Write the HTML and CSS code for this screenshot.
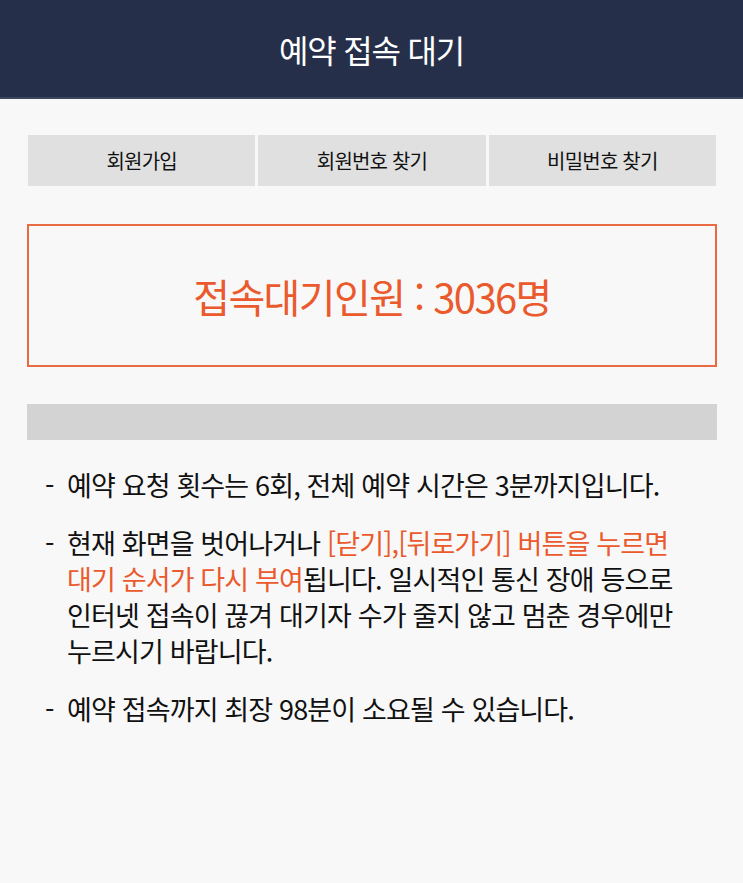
FILE: index.html
```html
<!DOCTYPE html>
<html lang="ko">

<head>
	<meta charset="UTF-8">
	<meta name="viewport" content="width=device-width, initial-scale=1.0">
	<title>예약 접속 대기</title>
	<link rel="stylesheet" href="styles.css">
</head>

<body>

	<header class="top-bar">
		<h1 class="top-title">예약 접속 대기</h1>
	</header>

	<main class="content">
		<nav class="tabs">
			<a class="tab" href="#">회원가입</a>
			<a class="tab" href="#">회원번호 찾기</a>
			<a class="tab" href="#">비밀번호 찾기</a>
		</nav>

		<div class="wait-box">
			<p class="wait-count">접속대기인원 : 3036명</p>
		</div>

		<div class="progress"></div>

		<ul class="notice">
			<li>예약 요청 횟수는 6회, 전체 예약 시간은 3분까지입니다.</li>
			<li>현재 화면을 벗어나거나 <span class="hl">[닫기],[뒤로가기] 버튼을 누르면<br>대기 순서가 다시 부여</span>됩니다. 일시적인 통신 장애 등으로<br>인터넷 접속이 끊겨 대기자 수가 줄지 않고 멈춘 경우에만<br>누르시기 바랍니다.</li>
			<li>예약 접속까지 최장 98분이 소요될 수 있습니다.</li>
		</ul>
	</main>

</body>

</html>
```

FILE: styles.css
```css
/* page base */
body {
	margin: 0;
	background-color: #f8f8f8;
	font-family: "Noto Sans CJK KR", "Noto Sans", sans-serif;
	color: #111;
}

.top-bar {
	height: 97px;
	background-color: #252f4a;
	border-bottom: 2px solid #3c4660;
	display: flex;
	align-items: center;
	justify-content: center;
}

.top-title {
	margin: 0;
	color: #fff;
	font-size: 32px;
	font-weight: 400;
	letter-spacing: -1.2px;
}

.content {
	padding: 36px 26px 0 27px;
}

.tabs {
	display: grid;
	grid-template-columns: 1fr 1fr 1fr;
	gap: 3px;
	margin: 0 1px;
}

.tab {
	height: 51px;
	background-color: #e0e0e0;
	color: #111;
	text-decoration: none;
	font-size: 20px;
	letter-spacing: -0.8px;
	display: flex;
	align-items: center;
	justify-content: center;
}

.wait-box {
	margin-top: 38px;
	height: 139px;
	border: 2px solid #ea6a43;
	display: flex;
	align-items: center;
	justify-content: center;
}

.wait-count {
	margin: 0;
	color: #ea5a2c;
	font-size: 40px;
	letter-spacing: -1.6px;
}

.progress {
	margin-top: 37px;
	height: 36px;
	background-color: #d3d3d3;
}

.notice {
	list-style: none;
	margin: 27px 0 0;
	padding: 0 10px 0 40px;
	font-size: 27px;
	line-height: 36px;
	letter-spacing: -0.85px;
	white-space: nowrap;
}

.notice li {
	position: relative;
	margin-bottom: 22px;
}

.notice li::before {
	content: "-";
	position: absolute;
	left: -22px;
}

.hl {
	color: #ea5a2c;
}
```
